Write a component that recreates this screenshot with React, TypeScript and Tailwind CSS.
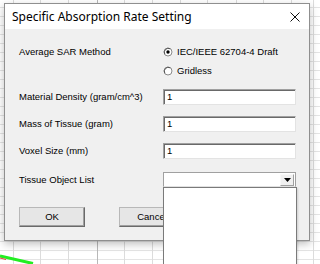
import React from "react";

const lab = "font-['Liberation_Sans',Arial,sans-serif] text-[9.5px] text-black leading-none";

function Radio({ checked }: { checked?: boolean }) {
  return (
    <svg width="10" height="10" viewBox="0 0 10 10" className="shrink-0">
      <circle cx="5" cy="5" r="4" fill="#fff" stroke="#8a8a8a" strokeWidth="1" />
      <path d="M1.8 7.2 A4 4 0 0 1 7.2 1.8" fill="none" stroke="#555" strokeWidth="1" />
      {checked && <circle cx="5" cy="5" r="1.7" fill="#000" />}
    </svg>
  );
}

function Field({ value }: { value: string }) {
  return (
    <div className="w-[133px] h-[16px] bg-white border-t border-l border-[#a0a0a0] border-r border-b border-r-[#e3e3e3] border-b-[#e3e3e3] shadow-[inset_1px_1px_0_#696969] flex items-center pl-[3px]">
      <span className={lab}>{value}</span>
    </div>
  );
}

function Row({ label, children, className = "" }: { label: string; children: React.ReactNode; className?: string }) {
  return (
    <div className={"flex items-center " + className}>
      <div className={"w-[144px] " + lab}>{label}</div>
      {children}
    </div>
  );
}

function Background() {
  const vx = [13, 40, 68, 97, 124, 152, 180, 207, 236, 263, 291, 313];
  const hy: number[] = [];
  for (let y = 7; y < 264; y += 9) hy.push(y);
  return (
    <svg className="absolute inset-0" width="320" height="264" viewBox="0 0 320 264">
      {hy.map((y) => (
        <line key={"h" + y} x1="0" y1={y + 0.5} x2="320" y2={y + 0.5} stroke="#e4e4e4" strokeWidth="1" />
      ))}
      {vx.map((x) => (
        <line key={"v" + x} x1={x + 0.5} y1="0" x2={x + 0.5} y2="264" stroke={x === 97 ? "#b8b8b8" : "#dcdcdc"} strokeWidth="1" />
      ))}
      <line x1="0" y1="256" x2="33" y2="263.5" stroke="#22ee22" strokeWidth="3" />
      <line x1="0" y1="258" x2="6" y2="259.5" stroke="#e04040" strokeWidth="1" />
    </svg>
  );
}

export default function App() {
  return (
    <div className="relative w-[320px] h-[264px] overflow-hidden bg-white">
      <Background />
      <div className="absolute left-[4px] top-[3px] w-[306px] h-[238px] border border-[#8f8f8f] bg-[#f0f0f0] shadow-[0_3px_8px_rgba(0,0,0,0.25)] flex flex-col">
        <div className="h-[25px] bg-white flex items-center justify-between pl-[7px] pr-[9px] shrink-0">
          <span className="font-['Noto_Sans',sans-serif] text-[12px] text-black leading-none">
            Specific Absorption Rate Setting
          </span>
          <svg width="10" height="10" viewBox="0 0 10 10">
            <path d="M0.5 0.5 L9.5 9.5 M9.5 0.5 L0.5 9.5" stroke="#111" strokeWidth="1" fill="none" />
          </svg>
        </div>
        <div className="flex flex-col pl-[14px] pt-[13px]">
          <div className="flex items-start">
            <div className={"w-[144px] h-[19px] flex items-center " + lab}>Average SAR Method</div>
            <div className="flex flex-col">
              <div className="h-[19px] flex items-center gap-[4px] pl-[0px]">
                <Radio checked />
                <span className={lab}>IEC/IEEE 62704-4 Draft</span>
              </div>
              <div className="h-[19px] flex items-center gap-[4px]">
                <Radio />
                <span className={lab}>Gridless</span>
              </div>
            </div>
          </div>
          <Row label="Material Density (gram/cm^3)" className="mt-[9px]">
            <Field value="1" />
          </Row>
          <Row label="Mass of Tissue (gram)" className="mt-[11px]">
            <Field value="1" />
          </Row>
          <Row label="Voxel Size (mm)" className="mt-[11px]">
            <Field value="1" />
          </Row>
          <Row label="Tissue Object List" className="mt-[13px] relative z-10">
            <div className="relative w-[133px] h-[15px] bg-white border-t border-l border-[#a0a0a0] border-r border-b border-r-[#a0a0a0] border-b-[#e3e3e3] flex justify-end items-center pr-[1px]">
              <div className="w-[14px] h-[12px] bg-[#f0f0f0] border border-[#f8f8f8] border-r-[#a0a0a0] border-b-[#a0a0a0] flex items-center justify-center">
                <svg width="7" height="4" viewBox="0 0 7 4">
                  <path d="M0 0 H7 L3.5 4 Z" fill="#000" />
                </svg>
              </div>
              <div className="absolute left-[-1px] top-[14px] w-[134px] h-[90px] bg-white border border-[#7a7a7a] shadow-[1px_1px_2px_rgba(0,0,0,0.15)]" />
            </div>
          </Row>
          <div className="flex mt-[20px] gap-[34px]">
            <button className="w-[66px] h-[20px] bg-[#e6e6e6] border border-[#b8b8b8] border-r-[#6a6a6a] border-b-[#6a6a6a] shadow-[inset_-1px_-1px_0_#a0a0a0] flex items-center justify-center">
              <span className={lab}>OK</span>
            </button>
            <button className="w-[66px] h-[20px] bg-[#e6e6e6] border border-[#b8b8b8] border-r-[#6a6a6a] border-b-[#6a6a6a] shadow-[inset_-1px_-1px_0_#a0a0a0] flex items-center justify-center">
              <span className={lab}>Cancel</span>
            </button>
          </div>
        </div>
      </div>
    </div>
  );
}
